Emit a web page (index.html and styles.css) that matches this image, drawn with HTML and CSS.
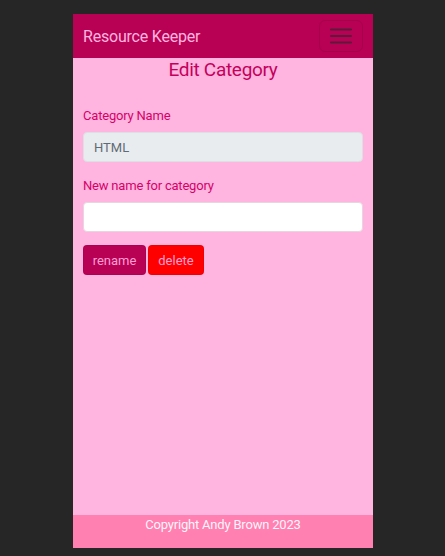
FILE: index.html
```html
<!DOCTYPE html>
<html lang="en">
<head>
<meta charset="utf-8">
<title>Resource Keeper</title>
<link rel="stylesheet" href="styles.css">
</head>
<body>
<div class="app">
  <nav class="navbar">
    <span class="brand">Resource Keeper</span>
    <button class="toggler" type="button" aria-label="Toggle navigation">
      <svg width="22" height="16" viewBox="0 0 22 16"><path d="M1 1.5h20M1 8h20M1 14.5h20" stroke="#5a1a3a" stroke-width="2" stroke-linecap="round"/></svg>
    </button>
  </nav>
  <main class="content">
    <h1 class="title">Edit Category</h1>
    <form class="form">
      <label class="label" for="cat">Category Name</label>
      <input class="input input-readonly" id="cat" value="HTML" readonly>
      <label class="label" for="newname">New name for category</label>
      <input class="input" id="newname">
      <div class="actions">
        <button class="btn btn-rename" type="button">rename</button>
        <button class="btn btn-delete" type="button">delete</button>
      </div>
    </form>
  </main>
  <footer class="footer">Copyright Andy Brown 2023</footer>
</div>
</body>
</html>
```
FILE: styles.css
```css
* { box-sizing: border-box; }
html, body { margin: 0; padding: 0; }
body {
  background: #262626;
  font-family: Roboto, "Liberation Sans", sans-serif;
  padding-top: 14px;
}
.app {
  width: 300px;
  height: 534px;
  margin-left: 73px;
  display: flex;
  flex-direction: column;
  background: #ffb5df;
}
.navbar {
  height: 44px;
  background: #b80055;
  display: flex;
  align-items: center;
  justify-content: space-between;
  padding: 0 10px;
}
.brand {
  color: #ffb5df;
  font-size: 16px;
  letter-spacing: -0.2px;
}
.toggler {
  width: 44px;
  height: 32px;
  margin-top: -1px;
  background: transparent;
  border: 1px solid rgba(0,0,0,0.1);
  border-radius: 6px;
  display: flex;
  align-items: center;
  justify-content: center;
  padding: 0;
}
.content {
  flex: 1;
  padding: 0 10px;
}
.title {
  margin: 0;
  padding-top: 1px;
  text-align: center;
  font-size: 19px;
  font-weight: 400;
  color: #c4005c;
  line-height: 22px;
  letter-spacing: -0.3px;
}
.form {
  display: flex;
  flex-direction: column;
  padding-top: 27px;
}
.label {
  color: #d6006a;
  font-size: 13px;
  line-height: 16px;
  margin-bottom: 8px;
  letter-spacing: -0.2px;
}
.input {
  height: 30px;
  border: 1px solid #e6d6e0;
  border-radius: 4px;
  background: #fff;
  font-family: inherit;
  font-size: 13px;
  padding: 0 10px;
  margin-bottom: 16px;
  outline: none;
}
.input-readonly {
  background: #e9ecef;
  color: #5f6b75;
  border-color: #dcdfe3;
}
.actions {
  display: flex;
  gap: 2px;
  margin-top: -3px;
}
.btn {
  height: 30px;
  border: 1px solid rgba(0,0,0,0.05);
  border-radius: 4px;
  font-family: inherit;
  font-size: 13px;
  color: #ff9ed2;
  padding: 0 6px;
}
.btn-rename { background: #b80055; width: 63px; }
.btn-delete { background: #ff0000; width: 56px; }
.footer {
  height: 33px;
  background: #ff80b1;
  color: #fff4fa;
  text-align: center;
  font-size: 13px;
  line-height: 20px;
  letter-spacing: -0.2px;
}
```
